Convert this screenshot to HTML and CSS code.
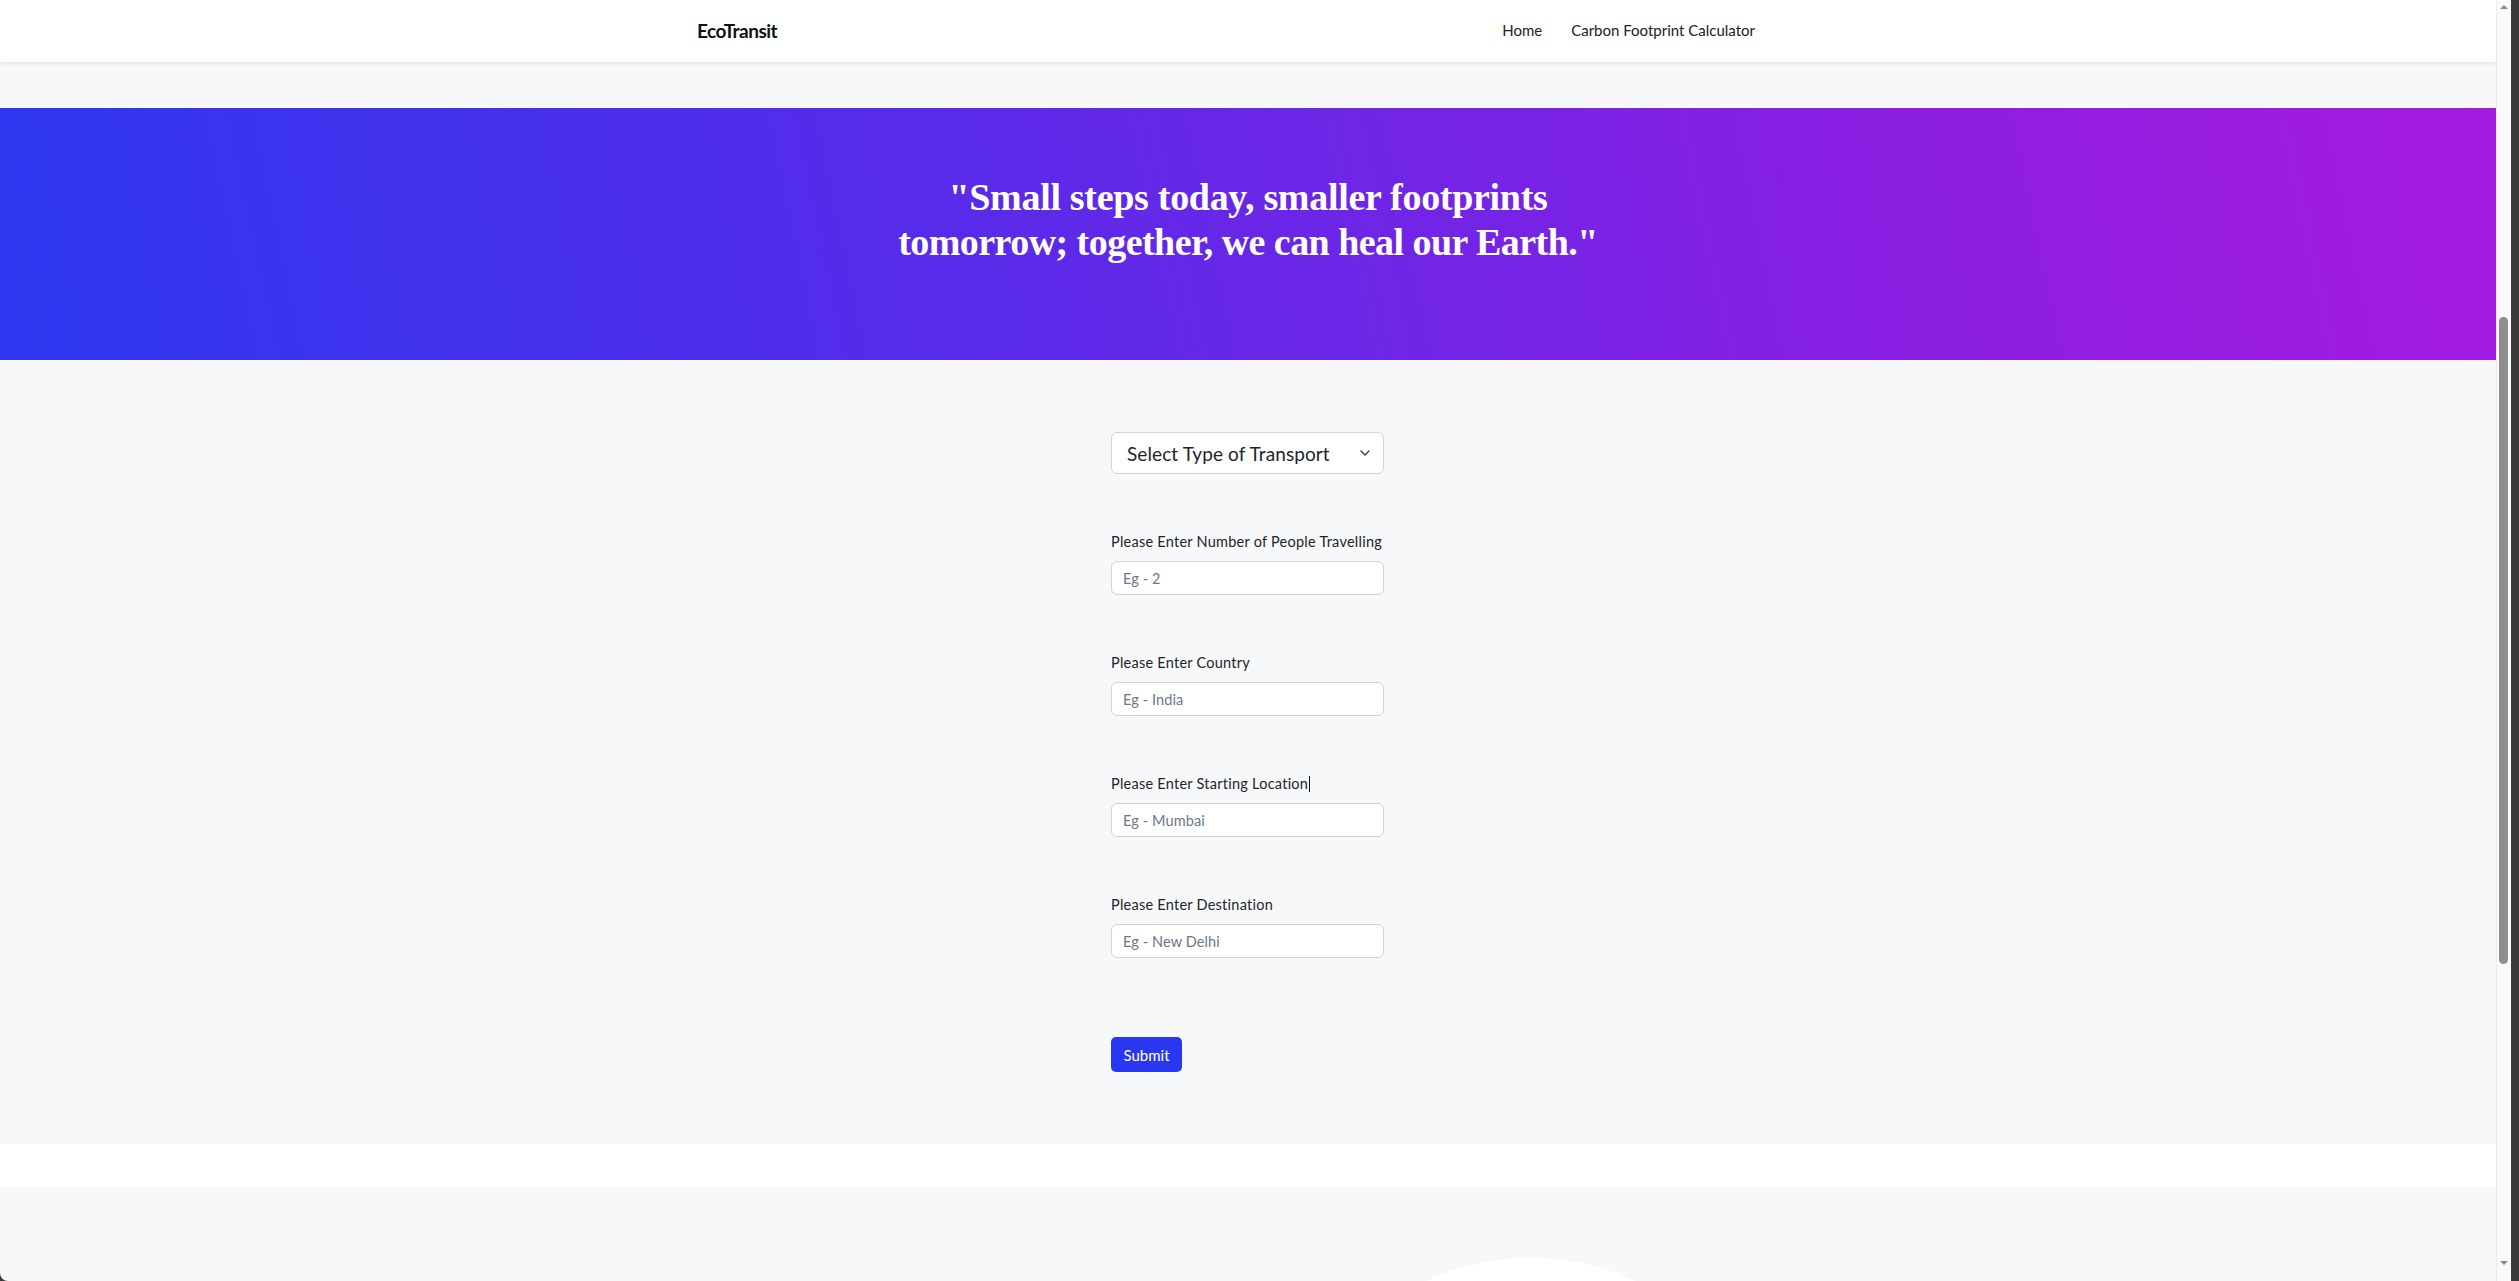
FILE: index.html
```html
<!DOCTYPE html>
<html lang="en">
<head>
<meta charset="utf-8">
<title>EcoTransit</title>
<link rel="stylesheet" href="styles.css">
</head>
<body>
<div class="window">
  <div class="page">
    <header class="navbar">
      <div class="nav-inner">
        <a class="brand">EcoTransit</a>
        <nav class="links">
          <a class="link">Home</a>
          <a class="link">Carbon Footprint Calculator</a>
        </nav>
      </div>
    </header>
    <div class="top-gap"></div>
    <section class="hero">
      <h1 class="quote">"Small steps today, smaller footprints<br><span class="line2">tomorrow; together, we can heal our Earth."</span></h1>
    </section>
    <section class="form-section">
      <form class="form">
        <div class="select">
          <span class="select-text">Select Type of Transport</span>
          <svg class="chev" width="10" height="6" viewBox="0 0 10 6"><path d="M1 1l4 4 4-4" fill="none" stroke="#343a40" stroke-width="1.3" stroke-linecap="round" stroke-linejoin="round"/></svg>
        </div>
        <div class="group">
          <label class="label">Please Enter Number of People Travelling</label>
          <input class="input" placeholder="Eg - 2">
        </div>
        <div class="group">
          <label class="label">Please Enter Country</label>
          <input class="input" placeholder="Eg - India">
        </div>
        <div class="group">
          <label class="label">Please Enter Starting Location<span class="caret"></span></label>
          <input class="input" placeholder="Eg - Mumbai">
        </div>
        <div class="group">
          <label class="label">Please Enter Destination</label>
          <input class="input" placeholder="Eg - New Delhi">
        </div>
        <button type="button" class="submit">Submit</button>
      </form>
    </section>
    <div class="white-band"></div>
    <section class="footer">
      <div class="blob"></div>
    </section>
  </div>
  <div class="scrollbar">
    <div class="arrow up"></div>
    <div class="track"><div class="thumb"></div></div>
    <div class="arrow down"></div>
  </div>
  <div class="edge"></div>
</div>
</body>
</html>
```

FILE: styles.css
```css
* { box-sizing: border-box; }
html, body { margin: 0; padding: 0; height: 100%; overflow: hidden; }
body { font-family: Lato, "Noto Sans", sans-serif; color: #212529; background: #3a3a3a; }

.window { display: flex; height: 1281px; }
.page { flex: 1; display: flex; flex-direction: column; background: #f7f8fa; overflow: hidden; border-bottom-left-radius: 8px; }

.navbar { height: 62px; background: #fff; box-shadow: 0 1px 4px rgba(0,0,0,0.12); position: relative; z-index: 2; flex: none; }
.nav-inner { height: 100%; margin-left: 697px; width: 1058px; display: flex; align-items: center; justify-content: space-between; }
.brand { font-weight: 700; font-size: 19px; letter-spacing: -0.5px; color: #111; padding-bottom: 2px; }
.links { display: flex; gap: 29px; padding-bottom: 3px; }
.link { font-size: 15px; color: #222; }

.top-gap { height: 46px; flex: none; }

.hero { height: 252px; flex: none; background: linear-gradient(78deg, #2e38f0 0%, #5a2ae9 40%, #8a1fe2 75%, #a51adf 100%); display: flex; justify-content: center; padding-top: 67px; }
.quote { margin: 0; font-family: "Liberation Serif", serif; font-weight: 700; font-size: 38px; line-height: 45px; color: #fff; text-align: center; letter-spacing: -0.3px; }
.line2 { letter-spacing: -0.55px; }

.form-section { height: 784px; flex: none; display: flex; justify-content: center; padding-top: 72px; }
.form { width: 273px; display: flex; flex-direction: column; margin-left: -1px; }
.select { height: 42px; background: #fff; border: 1px solid #ced4da; border-radius: 6px; display: flex; align-items: center; justify-content: space-between; padding: 0 13px 0 15px; }
.select-text { font-size: 19px; letter-spacing: 0.1px; color: #212529; }
.group { display: flex; flex-direction: column; margin-top: 58px; }
.label { font-size: 14.5px; letter-spacing: 0.25px; line-height: 20px; color: #212529; margin-bottom: 9px; display: flex; align-items: center; }
.caret { display: inline-block; width: 1px; height: 16px; background: #111; margin-left: 1px; }
.input { height: 34px; border: 1px solid #ced4da; border-radius: 6px; background: #fff; padding: 0 11px; font-family: Lato, "Noto Sans", sans-serif; font-size: 14.5px; letter-spacing: 0.1px; color: #212529; outline: none; }
.input::placeholder { color: #6c7787; }
.submit { margin-top: 79px; align-self: flex-start; width: 71px; height: 35px; background: #2a37f1; color: #fff; border: none; border-radius: 5px; font-family: Lato, "Noto Sans", sans-serif; font-size: 15px; padding: 0; }

.white-band { height: 43px; background: #fff; flex: none; }
.footer { flex: 1; position: relative; overflow: hidden; }
.blob { position: absolute; left: 1281px; top: 71px; width: 500px; height: 500px; border-radius: 50%; background: #fff; }

.scrollbar { width: 15px; flex: none; background: #fafafa; border-left: 1px solid #ececec; display: flex; flex-direction: column; align-items: center; }
.arrow { width: 0; height: 0; border-left: 4px solid transparent; border-right: 4px solid transparent; flex: none; }
.arrow.up { border-bottom: 4px solid #8a8a8a; margin-top: 5px; }
.arrow.down { border-top: 4px solid #8a8a8a; margin-bottom: 16px; }
.track { flex: 1; width: 100%; position: relative; }
.thumb { position: absolute; left: 2px; top: 308px; width: 9px; height: 647px; background: #8e8e8e; border-radius: 5px; }
.edge { width: 8px; flex: none; background: #3a3a3a; }
```
